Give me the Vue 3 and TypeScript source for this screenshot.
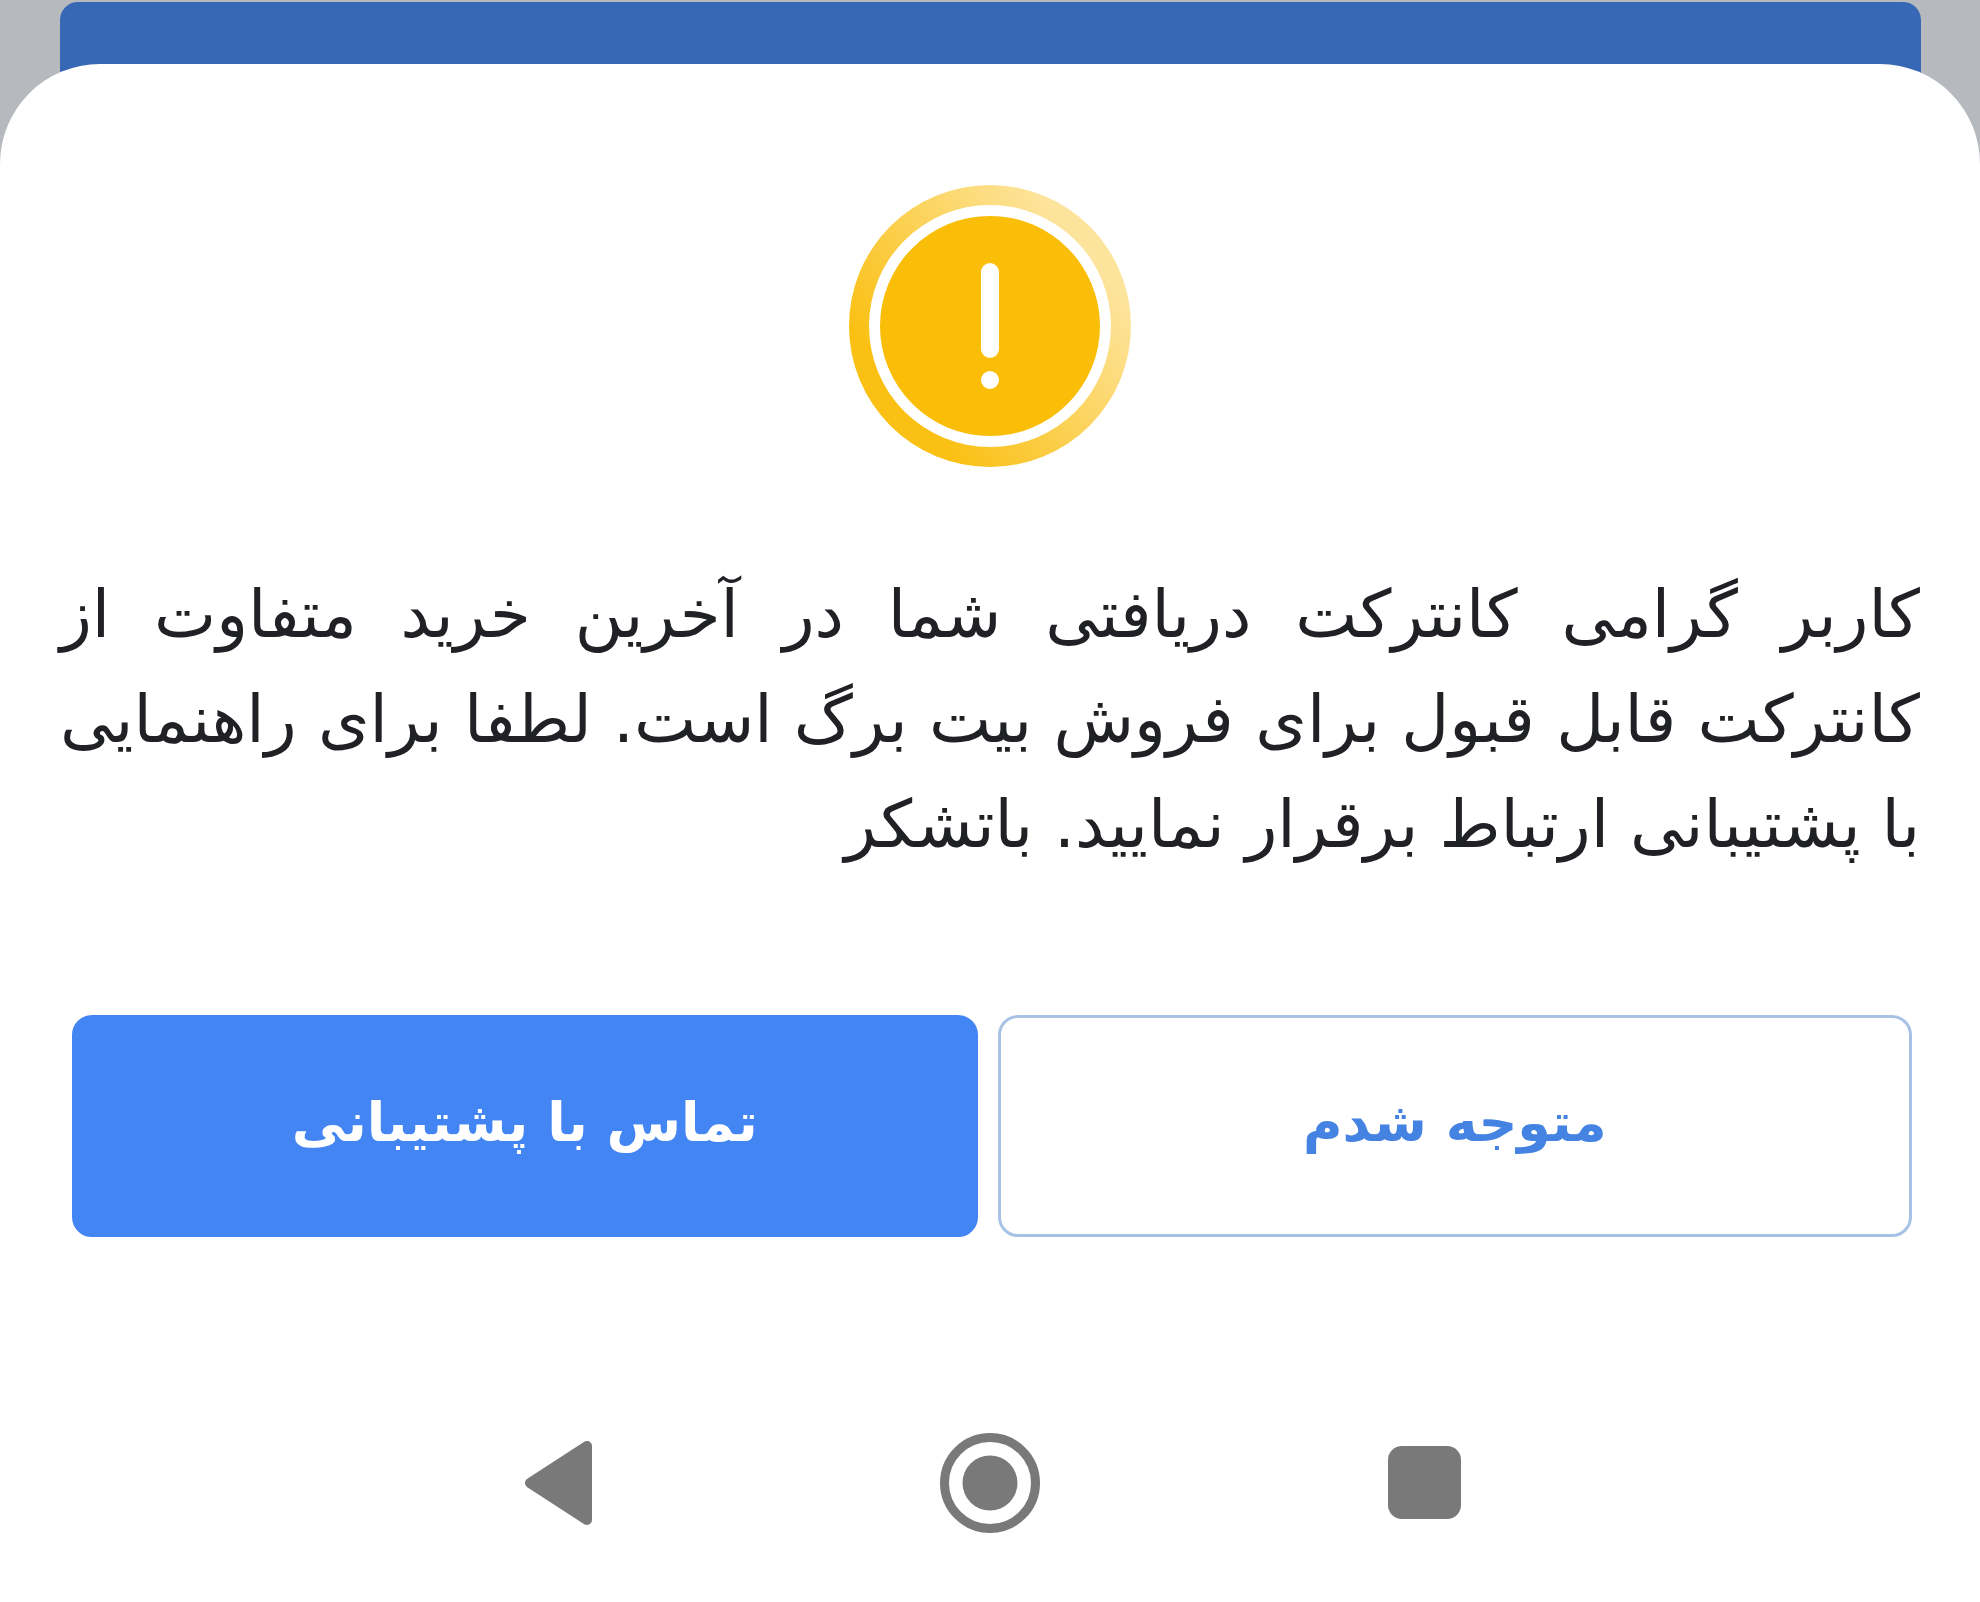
<script setup lang="ts">
const message: string =
  'کاربر گرامی کانترکت دریافتی شما در آخرین خرید متفاوت از کانترکت قابل قبول برای فروش بیت برگ است. لطفا برای راهنمایی با پشتیبانی ارتباط برقرار نمایید. باتشکر'
</script>

<template>
  <div class="screen" dir="rtl" lang="fa">
    <div class="backdrop"><div class="card"></div></div>
    <main class="sheet">
      <svg class="warning" viewBox="0 0 282 282" aria-hidden="true">
        <defs>
          <linearGradient id="ring" x1="0.2" y1="0.75" x2="0.85" y2="0.25">
            <stop offset="0" stop-color="#fac014" />
            <stop offset="1" stop-color="#fde49c" />
          </linearGradient>
        </defs>
        <circle cx="141" cy="141" r="141" fill="url(#ring)" />
        <circle cx="141" cy="141" r="121" fill="#fff" />
        <circle cx="141" cy="141" r="110" fill="#fabe08" />
        <rect x="132" y="78" width="18" height="95" rx="9" fill="#fff" />
        <circle cx="141" cy="195" r="9" fill="#fff" />
      </svg>
      <p class="message">{{ message }}</p>
      <div class="actions">
        <button type="button" class="button outline">متوجه شدم</button>
        <button type="button" class="button filled">تماس با پشتیبانی</button>
      </div>
    </main>
    <nav class="system" dir="ltr">
      <button type="button" class="key" aria-label="Back">
        <svg width="104" height="104" viewBox="0 0 104 104"><path d="M27 52L84 15V89Z" fill="#797979" stroke="#797979" stroke-width="10" stroke-linejoin="round" /></svg>
      </button>
      <button type="button" class="key" aria-label="Home">
        <svg width="104" height="104" viewBox="0 0 104 104"><circle cx="52" cy="52" r="45.5" fill="none" stroke="#797979" stroke-width="9" /><circle cx="52" cy="52" r="27.5" fill="#797979" /></svg>
      </button>
      <button type="button" class="key" aria-label="Recents">
        <svg width="104" height="104" viewBox="0 0 104 104"><rect x="15" y="15" width="73" height="73" rx="14" fill="#797979" /></svg>
      </button>
    </nav>
  </div>
</template>

<style>
body {
  margin: 0;
  background: #fff;
}
</style>

<style scoped>
.screen {
  min-height: 100vh;
  font-family: "DejaVu Sans", sans-serif;
  color: #202124;
}
.backdrop {
  height: 180px;
  padding: 2px 59px 0 60px;
  box-sizing: border-box;
  background: #b6b9be;
}
.card {
  height: 100%;
  border-radius: 18px 18px 0 0;
  background: #3768b5;
}
.sheet {
  position: relative;
  margin-top: -116px;
  padding: 121px 60px 0;
  border-radius: 100px 100px 0 0;
  background: #fff;
}
.warning {
  display: block;
  width: 282px;
  height: 282px;
  margin: 0 auto;
}
.message {
  margin: 95px 0 0;
  font-size: 66px;
  line-height: 105px;
  text-align: justify;
}
.actions {
  display: flex;
  gap: 20px;
  margin-top: 138px;
  padding: 0 8px 0 12px;
}
.button {
  flex: 100;
  height: 222px;
  padding: 0 20px 8px;
  border: 3px solid #a8c2e6;
  border-radius: 20px;
  font: bold 54px "DejaVu Sans", sans-serif;
}
.outline {
  flex: 101;
  background: #fff;
  color: #4583e2;
}
.filled {
  border-color: #4385f2;
  background: #4385f2;
  color: #fff;
}
.system {
  display: flex;
  justify-content: center;
  gap: 331px;
  margin-top: 194px;
}
.key {
  display: flex;
  padding: 0;
  border: 0;
  background: none;
}
</style>
